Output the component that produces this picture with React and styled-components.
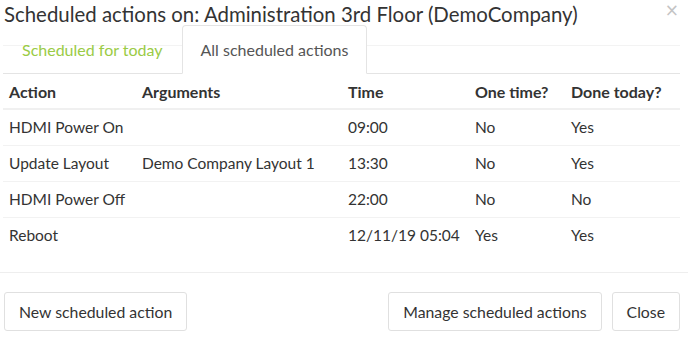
import React from 'react'
import styled, { createGlobalStyle } from 'styled-components'

const Global = createGlobalStyle`
    body {
        margin: 0;
        background: #fff;
        font-family: Lato, "Open Sans", sans-serif;
        color: #333;
    }
`

// Styles
const Modal = styled.div`
    width: 688px;
    height: 340px;
    display: flex;
    flex-direction: column;
`
const Header = styled.div`
    display: flex;
    justify-content: space-between;
    align-items: flex-start;
    padding: 3px 9px 0 4px;
`
const Title = styled.h4`
    margin: 0;
    font-size: 20.4px;
    font-weight: 400;
    line-height: 22px;
    color: #333;
    white-space: nowrap;
`
const CloseX = styled.span`
    font-size: 17px;
    line-height: 14px;
    color: #c4c4c4;
    font-family: "DejaVu Sans", sans-serif;
`
const TabBar = styled.div`
    display: flex;
    margin: 0 8px 0 3px;
    border-bottom: 1px solid #e4e4e4;
    background: linear-gradient(to bottom, transparent 20px, #f3f3f3 20px, #f3f3f3 21px, transparent 21px);
`
const Tab = styled.div`
    padding: 0 18px;
    height: 47px;
    display: flex;
    align-items: center;
    font-size: 16px;
    margin-bottom: -1px;
    border: 1px solid ${p => (p.$active ? '#e4e4e4' : 'transparent')};
    border-bottom-color: ${p => (p.$active ? '#fff' : 'transparent')};
    border-radius: 4px 4px 0 0;
    background: ${p => (p.$active ? '#fff' : 'transparent')};
    color: ${p => (p.$active ? '#555' : '#9acb45')};
`
const Table = styled.div`
    margin: 0 8px 0 3px;
    display: grid;
    grid-template-columns: 133px 206px 127px 96px 115px;
`
const HeadCell = styled.div`
    padding: 0 6px;
    height: 34px;
    display: flex;
    align-items: center;
    font-weight: 700;
    font-size: 16px;
    color: #333;
    border-bottom: 2px solid #f0f0f0;
`
const Cell = styled.div`
    padding: 0 6px 2px;
    height: 36px;
    box-sizing: border-box;
    display: flex;
    align-items: center;
    font-size: 15.5px;
    color: #333;
    white-space: nowrap;
    border-bottom: ${p => (p.$last ? 'none' : '1px solid #f2f2f2')};
`
const Footer = styled.div`
    margin-top: 18px;
    border-top: 1px solid #eeeeee;
    display: flex;
    align-items: center;
    padding: 19px 8px 0 4px;
    gap: 10px;
`
const Spacer = styled.div`
    flex: 1;
`
const Button = styled.button`
    font-family: inherit;
    font-size: 15.8px;
    color: #333;
    background: #fff;
    border: 1px solid #e0e0e0;
    border-radius: 3px;
    height: 39px;
    padding: 0 14px;
`

const rows = [
    ['HDMI Power On', '', '09:00', 'No', 'Yes'],
    ['Update Layout', 'Demo Company Layout 1', '13:30', 'No', 'Yes'],
    ['HDMI Power Off', '', '22:00', 'No', 'No'],
    ['Reboot', '', '12/11/19 05:04', 'Yes', 'Yes'],
]

const App = () => {
    return (
        <Modal>
            <Global />
            <Header>
                <Title>Scheduled actions on: Administration 3rd Floor (DemoCompany)</Title>
                <CloseX>×</CloseX>
            </Header>
            <TabBar>
                <Tab>Scheduled for today</Tab>
                <Tab $active>All scheduled actions</Tab>
            </TabBar>
            <Table>
                {['Action', 'Arguments', 'Time', 'One time?', 'Done today?'].map(h => (
                    <HeadCell key={h}>{h}</HeadCell>
                ))}
                {rows.map((r, i) =>
                    r.map((c, j) => (
                        <Cell key={i + '-' + j} $last={i === rows.length - 1}>{c}</Cell>
                    ))
                )}
            </Table>
            <Footer>
                <Button>New scheduled action</Button>
                <Spacer />
                <Button>Manage scheduled actions</Button>
                <Button>Close</Button>
            </Footer>
        </Modal>
    )
}

export default App
